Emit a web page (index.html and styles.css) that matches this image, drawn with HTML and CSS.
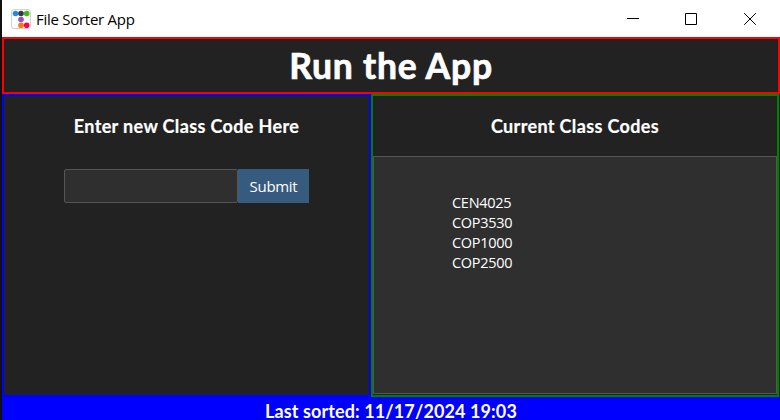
FILE: index.html
```html
<!DOCTYPE html>
<html lang="en">
<head>
<meta charset="utf-8">
<title>File Sorter App</title>
<link rel="stylesheet" href="styles.css">
</head>
<body>
<div class="window">
  <header class="titlebar">
    <svg class="app-icon" width="20" height="20" viewBox="0 0 20 20">
      <rect x=".5" y=".5" width="19" height="19" rx="2.5" fill="#fff" stroke="#d2d2d2"/>
      <circle cx="4.5" cy="4.5" r="2.8" fill="#228be6"/>
      <circle cx="10" cy="4.5" r="2.8" fill="#343a40"/>
      <circle cx="15.7" cy="4.5" r="2.8" fill="#40b81a"/>
      <circle cx="10" cy="10.5" r="2.8" fill="#9b50c0"/>
      <circle cx="10" cy="16.3" r="2.8" fill="#fd7614"/>
      <circle cx="15.7" cy="16.3" r="2.8" fill="#fa0540"/>
    </svg>
    <span class="app-name">File Sorter App</span>
    <svg class="control" width="12" height="12" viewBox="0 0 12 12"><path d="M0 5.5H12"/></svg>
    <svg class="control" width="12" height="12" viewBox="0 0 12 12"><path d="M.5 .5H11.5V11.5H.5Z"/></svg>
    <svg class="control close" width="12" height="12" viewBox="0 0 12 12"><path d="M.2 .2L11.8 11.8M11.8 .2L.2 11.8"/></svg>
  </header>
  <section class="banner"><h1>Run the App</h1></section>
  <main class="panels">
    <section class="entry">
      <h2>Enter new Class Code Here</h2>
      <form class="entry-form">
        <input class="code-input" type="text" aria-label="Class code">
        <button class="submit" type="button"><span>Submit</span></button>
      </form>
    </section>
    <section class="codes">
      <h2>Current Class Codes</h2>
      <ul class="code-list">
        <li>CEN4025</li>
        <li>COP3530</li>
        <li>COP1000</li>
        <li>COP2500</li>
      </ul>
    </section>
  </main>
  <footer class="status"><span>Last sorted: 11/17/2024 19:03</span></footer>
</div>
</body>
</html>
```
FILE: styles.css
```css
* { box-sizing: border-box; }
body {
  margin: 0;
  background: #000;
  color: #fff;
  font-family: "Open Sans", "Noto Sans", sans-serif;
  overflow: hidden;
}
.window {
  width: 780px;
  height: 420px;
  border-left: 2px solid #101010;
  display: flex;
  flex-direction: column;
  background: #222;
}
.titlebar {
  height: 37px;
  background: #fff;
  color: #000;
  display: flex;
  align-items: center;
  padding: 0 24px 0 9px;
  flex: none;
}
.app-icon { margin-right: 5px; }
.app-name {
  font-size: 15px;
  letter-spacing: -0.27px;
  margin-right: auto;
  white-space: nowrap;
}
.control {
  margin-left: 46px;
  fill: none;
  stroke: #000;
  stroke-width: 1;
}
.control.close { margin-left: 47px; }
h1, h2 {
  margin: 0;
  font-family: Lato, sans-serif;
  font-weight: 700;
  white-space: nowrap;
}
.banner {
  height: 57px;
  flex: none;
  border: 2px solid #f00;
  display: flex;
  justify-content: center;
  align-items: center;
}
h1 {
  font-size: 35.5px;
  line-height: 53px;
  letter-spacing: 0.75px;
  -webkit-text-stroke: 0.7px #fff;
}
h2 {
  font-size: 18px;
  line-height: 24px;
  letter-spacing: 0.36px;
  text-align: center;
  -webkit-text-stroke: 0.2px #fff;
}
.panels {
  height: 303px;
  flex: none;
  display: grid;
  grid-template-columns: 369px 408px;
}
.entry {
  border: 2px solid #00f;
  height: 303px;
  padding-top: 18px;
}
.entry-form {
  display: flex;
  margin: 31px 0 0 60px;
}
.code-input {
  width: 174px;
  height: 34px;
  background: #2f2f2f;
  border: 1px solid #555;
  border-radius: 2px;
}
.submit {
  width: 71px;
  height: 34px;
  padding: 0;
  border: 0;
  background: #375a7f;
  color: #fff;
  font: 15px "Open Sans", sans-serif;
  letter-spacing: -0.3px;
}
.codes {
  border: 2px solid green;
  padding-top: 18px;
}
.code-list {
  list-style: none;
  margin: 18px 0 0;
  padding: 36px 0 0 78px;
  width: 404px;
  height: 238px;
  border: 1px solid #555;
  background: #2f2f2f;
  font-size: 14.5px;
  letter-spacing: -0.28px;
  line-height: 20px;
}
.status {
  flex: 1;
  padding-top: 4px;
  background: #00f;
  font: 700 18px/20px Lato, sans-serif;
  letter-spacing: 0.1px;
  text-align: center;
}
```
